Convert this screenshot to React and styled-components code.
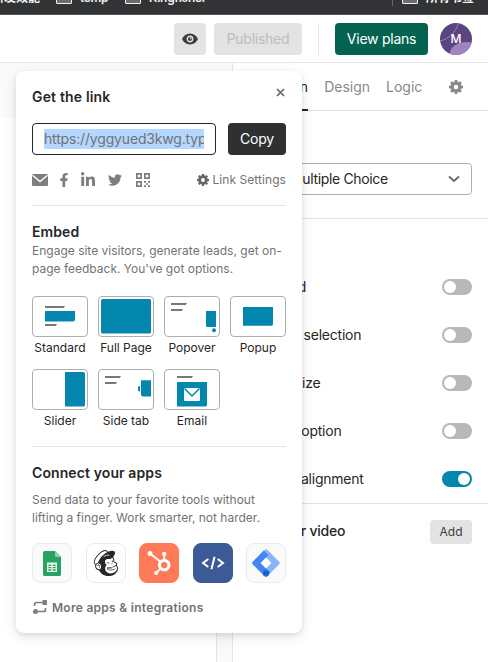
import React from 'react';
import styled, { createGlobalStyle } from 'styled-components';
import { FaFacebookF, FaLinkedinIn, FaTwitter } from 'react-icons/fa';
import { SiMailchimp, SiHubspot } from 'react-icons/si';

const GlobalStyle = createGlobalStyle`
  * { box-sizing: border-box; }
  body {
    margin: 0;
    overflow: hidden;
    background: #fff;
    color: #262627;
    font-family: Inter, "Noto Sans CJK SC", sans-serif;
    font-size: 14px;
  }
  svg { display: block; flex: none; }
  button { font-family: inherit; border: 0; padding: 0; margin: 0; }
`;

const Page = styled.div`
  position: relative;
  width: 488px;
  height: 662px;
  overflow: hidden;
  display: flex;
  flex-direction: column;
`;

const BookmarkBar = styled.div`
  height: 15px;
  flex: none;
  background: #323335;
  border-bottom: 1px solid #55565a;
  color: #f2f2f2;
  font-size: 12px;
  font-weight: 600;
  line-height: 14px;
  overflow: hidden;
  display: flex;
  align-items: flex-start;
`;

const Bookmark = styled.span`
  display: block;
  width: ${(p) => p.$w}px;
  margin-top: -9px;
  margin-left: ${(p) => p.$ml || 0}px;
  white-space: nowrap;
  flex: none;
  letter-spacing: ${(p) => p.$ls || 0}px;
`;

const Folder = styled.span`
  width: 16px;
  height: 11px;
  margin: -7px 8px 0 0;
  border: 1px solid #f2f2f2;
  border-radius: 1px;
  background: #6c6c6e;
  flex: none;
`;

const BarSplit = styled.span`
  width: 1px;
  height: 6px;
  margin-right: 9px;
  background: #68696b;
`;

const TopBar = styled.header`
  height: 48px;
  flex: none;
  padding-right: 16px;
  border-bottom: 1px solid #e6e6e6;
  display: flex;
  align-items: center;
  justify-content: flex-end;
`;

const TopButton = styled.button`
  width: ${(p) => p.$w}px;
  height: 32px;
  border-radius: 4px;
  margin-right: ${(p) => p.$mr}px;
  display: flex;
  align-items: center;
  justify-content: center;
  font-size: 14px;
  letter-spacing: ${(p) => p.$ls || 0}px;
  color: ${(p) => p.$color || '#3c3c3c'};
  background: ${(p) => p.$bg || '#e3e3e3'};
`;

const TopSplit = styled.span`
  width: 1px;
  height: 32px;
  margin-right: 16px;
  background: #e6e6e6;
`;

const Avatar = styled.div`
  width: 32px;
  height: 32px;
`;

const Body = styled.main`
  flex: 1;
  min-height: 0;
  display: flex;
`;

const Canvas = styled.section`
  width: 233px;
  flex: none;
  padding: 54px 15px 0 0;
  background: #fafafa;
  border-right: 1px solid #e6e6e6;
  display: flex;
`;

const Sheet = styled.div`
  flex: 1;
  background: #fff;
  border-right: 1px solid #e3e3e3;
`;

const Panel = styled.aside`
  flex: 1;
  display: flex;
  flex-direction: column;
`;

const Tabs = styled.nav`
  height: 48px;
  flex: none;
  padding: 0 25px 0 15px;
  border-bottom: 1px solid #e3e3e3;
  display: flex;
`;

const Tab = styled.span`
  height: 48px;
  margin-right: 16px;
  line-height: 48px;
  letter-spacing: ${(p) => (p.$on ? 0.12 : 0)}px;
  color: ${(p) => (p.$on ? '#262627' : '#898989')};
  border-bottom: ${(p) => (p.$on ? '2px solid #262627' : '0')};
`;

const TabGear = styled.span`
  margin: 17px 0 0 auto;
`;

const TypeBlock = styled.div`
  height: 108px;
  flex: none;
  padding: 52px 16px 0;
  border-bottom: 1px solid #e3e3e3;
`;

const Select = styled.div`
  height: 32px;
  padding: 0 10px 1px 40px;
  letter-spacing: -0.35px;
  border: 1px solid #aeaeae;
  border-radius: 4px;
  display: flex;
  align-items: center;
  justify-content: space-between;
`;

const SettingsBlock = styled.div`
  height: 285px;
  flex: none;
  padding: 16px 16px 0;
  border-bottom: 1px solid #e3e3e3;
`;

const SettingsTitle = styled.div`
  height: 28px;
  line-height: 24px;
  font-weight: 600;
  letter-spacing: -0.6px;
`;

const Row = styled.div`
  height: 48px;
  display: flex;
  align-items: center;
  justify-content: space-between;
`;

const RowLabel = styled.span`
  white-space: nowrap;
  margin-bottom: 2px;
  font-weight: ${(p) => (p.$bold ? 500 : 400)};
  letter-spacing: ${(p) => p.$ls || 0}px;
`;

const Toggle = styled.span`
  width: 30px;
  height: 16px;
  padding: 2px;
  border-radius: 8px;
  background: ${(p) => (p.$on ? '#0487af' : '#b8b8b8')};
  display: flex;
  justify-content: ${(p) => (p.$on ? 'flex-end' : 'flex-start')};
`;

const Knob = styled.span`
  width: 12px;
  height: 12px;
  border-radius: 50%;
  background: #fff;
`;

const MediaRow = styled.div`
  height: 55px;
  padding: 0 16px;
  display: flex;
  align-items: center;
  justify-content: space-between;
`;

const AddButton = styled.button`
  width: 42px;
  height: 24px;
  padding-bottom: 1px;
  border-radius: 4px;
  background: #e3e3e3;
  color: #3c3c3c;
  font-size: 12px;
`;

const Modal = styled.section`
  position: absolute;
  left: 16px;
  top: 71px;
  width: 286px;
  height: 562px;
  padding: 16px;
  border-radius: 8px;
  background: #fff;
  box-shadow: 0 2px 4px rgba(0, 0, 0, 0.08), 0 4px 14px rgba(0, 0, 0, 0.1);
`;

const Heading = styled.h2`
  margin: 0;
  font-size: 14px;
  line-height: 20px;
  font-weight: 600;
  letter-spacing: ${(p) => p.$ls || 0}px;
`;

const ModalHead = styled.div`
  height: 36px;
  display: flex;
  justify-content: space-between;
  svg { margin: 1px 1px 0 0; }
`;

const LinkRow = styled.div`
  display: flex;
  justify-content: space-between;
`;

const LinkField = styled.div`
  width: 184px;
  height: 32px;
  padding: 5px 11px;
  border: 1px solid #262627;
  border-radius: 4px;
`;

const Selected = styled.div`
  height: 20px;
  line-height: 20px;
  overflow: hidden;
  white-space: nowrap;
  letter-spacing: -0.17px;
  background: #b3d7ff;
  color: #737373;
`;

const CopyButton = styled.button`
  width: 58px;
  height: 32px;
  padding-bottom: 1px;
  border-radius: 4px;
  background: #2f3032;
  color: #fff;
  font-size: 14px;
  letter-spacing: -0.15px;
`;

const ShareRow = styled.div`
  height: 50px;
  display: flex;
  align-items: center;
  color: #7e7e7e;
`;

const ShareIcon = styled.span`
  margin-right: ${(p) => p.$mr}px;
`;

const LinkSettings = styled.span`
  margin-left: auto;
  display: flex;
  align-items: center;
  gap: 3px;
  padding-bottom: 1px;
  font-size: 12px;
  letter-spacing: 0.07px;
  white-space: nowrap;
  color: #737373;
`;

const Embed = styled.section`
  height: 241px;
  padding-top: 16px;
  border-top: 1px solid #e6e6e6;
`;

const Copy = styled.p`
  margin: ${(p) => p.$mt || 0}px 0 0;
  font-size: 12px;
  line-height: 18px;
  white-space: nowrap;
  color: #737373;
  letter-spacing: ${(p) => p.$ls || 0}px;
`;

const EmbedGrid = styled.div`
  margin-top: 18px;
  display: grid;
  grid-template-columns: repeat(4, 56px);
  grid-auto-rows: 73px;
  column-gap: 10px;
`;

const EmbedItem = styled.div`
  display: flex;
  flex-direction: column;
  align-items: center;
  font-size: 12px;
  line-height: 21px;
  white-space: nowrap;
`;

const Connect = styled.section`
  padding-top: 16px;
  border-top: 1px solid #e6e6e6;
`;

const Apps = styled.div`
  margin-top: 16px;
  display: flex;
  justify-content: space-between;
`;

const AppTile = styled.div`
  width: 40px;
  height: 40px;
  border-radius: 8px;
  border: 1px solid ${(p) => p.$line || p.$bg};
  background: ${(p) => p.$bg};
  color: ${(p) => p.$color || '#262627'};
  display: flex;
  align-items: center;
  justify-content: center;
`;

const More = styled.div`
  margin-top: 15px;
  height: 18px;
  padding-left: 1px;
  display: flex;
  align-items: center;
  gap: 5px;
  font-size: 12px;
  font-weight: 600;
  letter-spacing: 0.28px;
  color: #737373;
`;

const TEETH = [0, 45, 90, 135, 180, 225, 270, 315];

const Gear = ({ size, color }) => (
  <svg width={size} height={size} viewBox="0 0 14 14">
    <circle cx="7" cy="7" r="3.8" fill="none" stroke={color} strokeWidth="3.2" />
    {TEETH.map((a) => (
      <rect key={a} x="5.6" y="0" width="2.8" height="3" rx="0.5" fill={color} transform={`rotate(${a} 7 7)`} />
    ))}
  </svg>
);

const Eye = () => (
  <svg width="16" height="12" viewBox="0 0 16 12">
    <path d="M8 .6C4.4.6 1.5 2.8 0 6c1.500 3.200 4.400 5.400 8 5.400s6.500-2.200 8-5.400C14.500 2.800 11.600.6 8 .6z" fill="#3c3c3c" />
    <circle cx="8" cy="6" r="2.7" fill="none" stroke="#e3e3e3" strokeWidth="1.4" />
    <circle cx="8.6" cy="5.400" r=".8" fill="#e3e3e3" />
  </svg>
);

const Mail = () => (
  <svg width="16" height="12" viewBox="0 0 16 12">
    <rect width="16" height="12" rx="1" fill="currentColor" />
    <path d="M0.500 1.200 8 7.600l7.500-6.400" fill="none" stroke="#fff" strokeWidth="1.500" />
  </svg>
);

const Qr = () => (
  <svg width="14" height="14" viewBox="0 0 14 14" fill="none" stroke="currentColor" strokeWidth="1.700">
    <path d="M.85.85h4.300v4.300H.85zM8.850.85h4.300v4.300h-4.300zM.85 8.850h4.300v4.300H.85z" />
    <path d="M8 8.800h2M12 8.800h2M10 11h2M8 13.200h2M12 13.200h2" />
  </svg>
);

const Lines = ({ x, y, w }) => (
  <path d={`M${x} ${y}h${w}l-1.200 2H${x}z`} fill="#77787a" />
);

const ART = {
  Standard: (
    <>
      <Lines x={13} y={10} w={20} />
      <path d="M13 15h30v8.500q0 2-2 2H13z" fill="#0487af" />
      <Lines x={13} y={28} w={12} />
    </>
  ),
  'Full Page': <rect x="3" y="3" width="50" height="34.500" rx="1.500" fill="#0487af" />,
  Popover: (
    <>
      <Lines x={7} y={7} w={16} />
      <Lines x={7} y={13} w={12} />
      <path d="M42 15h10v16h-8.500q-1.500 0-1.500-1.500z" fill="#0487af" />
      <circle cx="50" cy="34.300" r="2" fill="#0487af" />
    </>
  ),
  Popup: <path d="M13 11h30v17q0 1.700-1.500 1.700H13z" fill="#0487af" />,
  Slider: <path d="M33 3h18.500q1.500 0 1.500 1.500V36q0 1.500-1.500 1.500H33z" fill="#0487af" />,
  'Side tab': (
    <>
      <Lines x={7} y={7} w={16} />
      <Lines x={7} y={13} w={12} />
      <path d="M43 11.200h10v16.300h-8.500L43 26zM42 17v5.500h-1l-1-1.300V18.300L41 17z" fill="#0487af" />
    </>
  ),
  Email: (
    <>
      <Lines x={13} y={7} w={16} />
      <path d="M13 13h30v23q0 1.500-1.500 1.500H13z" fill="#0487af" />
      <rect x="20" y="19" width="16" height="13" rx="1" fill="#fff" />
      <path d="M20.500 19.500 28 27l7.500-7.500" fill="none" stroke="#0487af" strokeWidth="1.500" />
    </>
  ),
};

const Thumb = ({ name }) => (
  <svg width="56" height="41" viewBox="0 0 56 41">
    <rect x=".5" y=".5" width="55" height="40" rx="3.500" fill="#fff" stroke="#aeaeae" />
    {ART[name]}
  </svg>
);

const Sheets = () => (
  <svg width="18" height="25" viewBox="0 0 18 25">
    <path d="M1.500 0H12l6 6v17.500a1.500 1.500 0 0 1-1.500 1.500h-15A1.500 1.500 0 0 1 0 23.500v-22A1.500 1.500 0 0 1 1.500 0z" fill="#28a263" />
    <path d="M12 0l6 6h-4.500A1.500 1.500 0 0 1 12 4.500z" fill="#8ed1b1" />
    <path d="M4 11.500h10v9.500H4z" fill="#eaf6ef" />
    <path d="M5.300 14.300h3M9.700 14.300h3M5.300 16.600h3M9.700 16.600h3M5.300 19h3M9.700 19h3" stroke="#28a263" strokeWidth="1.300" />
  </svg>
);

const Code = () => (
  <svg width="24" height="14" viewBox="0 0 24 14" fill="none" stroke="#fff" strokeWidth="2">
    <path d="M7.300 3 2 7l5.300 4M16.700 3 22 7l-5.300 4M13.600.8l-3.200 12.400" />
  </svg>
);

const TagManager = () => (
  <svg width="28" height="28" viewBox="0 0 28 28">
    <path d="M12.500.9a2.200 2.200 0 0 1 3 0L27 12.500a2.200 2.200 0 0 1 0 3L15.500 27.100a2.200 2.200 0 0 1-3 0L1 15.500a2.200 2.200 0 0 1 0-3z" fill="#8ab4f8" />
    <path d="M11.800 1.600 16.400 6 9 14l9.300 9.300-2.800 3.800a2.200 2.200 0 0 1-3 0L1 15.500a2.200 2.200 0 0 1 0-3z" fill="#4285f4" />
    <path d="M14 8.500l5.500 5.500-5.500 5.500L8.500 14z" fill="#fff" />
    <circle cx="14" cy="24.200" r="3.200" fill="#246fdb" />
    <path d="M13 22.500l-.5 3.500M15.500 22.500l-.5 3.500M12 23.500h4M11.800 25h4" stroke="#1c4d9c" strokeWidth=".6" />
  </svg>
);

const Swap = () => (
  <svg width="14" height="14" viewBox="0 0 14 14" fill="none" stroke="#7e7e7e" strokeWidth="1.700">
    <path d="M1.500 6V4.500a2 2 0 0 1 2-2H10M12.500 8v1.500a2 2 0 0 1-2 2H3" />
    <rect x="9.500" y="0" width="4.500" height="5" rx=".6" fill="#7e7e7e" stroke="none" />
    <circle cx="2.500" cy="11.500" r="2.500" fill="#7e7e7e" stroke="none" />
  </svg>
);

const OPTIONS = [
  ['Required', false],
  ['Multiple selection', false],
  ['Randomize', false],
  ['"Other" option', false],
  ['Vertical alignment', true],
];

export default function App() {
  return (
    <Page>
      <GlobalStyle />
      <BookmarkBar>
        <Bookmark $w={64} $ml={-8}>研发效能</Bookmark>
        <Folder />
        <Bookmark $w={45} $ls={-0.3}>temp</Bookmark>
        <Folder />
        <Bookmark $w={243} $ls={-0.3}>Kingfisher</Bookmark>
        <BarSplit />
        <Folder />
        <Bookmark $w={50}>所有书签</Bookmark>
      </BookmarkBar>
      <TopBar>
        <TopButton $w={32} $mr={8}><Eye /></TopButton>
        <TopButton $w={88} $mr={16} $color="#bdbdbd" $ls={-0.25}>Published</TopButton>
        <TopSplit />
        <TopButton $w={93} $mr={12} $bg="#046350" $color="#fff" $ls={-0.25}>View plans</TopButton>
        <Avatar>
          <svg width="32" height="32" viewBox="0 0 32 32">
            <defs><clipPath id="face"><circle cx="16" cy="16" r="16" /></clipPath></defs>
            <g clipPath="url(#face)">
              <rect width="32" height="32" fill="#5a4580" />
              <ellipse cx="27" cy="30" rx="17" ry="11" fill="#9d84c0" />
              <path d="M0 18C9 16 16 9 18.500 0" fill="none" stroke="#a89bbd" strokeWidth=".8" />
            </g>
            <text x="16" y="20" textAnchor="middle" fontSize="12" fontWeight="500" fill="#fff">M</text>
          </svg>
        </Avatar>
      </TopBar>
      <Body>
        <Canvas><Sheet /></Canvas>
        <Panel>
          <Tabs>
            <Tab $on>Question</Tab>
            <Tab>Design</Tab>
            <Tab>Logic</Tab>
            <TabGear><Gear size={14} color="#898989" /></TabGear>
          </Tabs>
          <TypeBlock>
            <Select>
              Multiple Choice
              <svg width="14" height="8" viewBox="0 0 14 8"><path d="M2 1.500l5 4.500 5-4.500" fill="none" stroke="#66676a" strokeWidth="1.800" /></svg>
            </Select>
          </TypeBlock>
          <SettingsBlock>
            <SettingsTitle>Settings</SettingsTitle>
            {OPTIONS.map(([label, on]) => (
              <Row key={label}>
                <RowLabel $ls={-0.22}>{label}</RowLabel>
                <Toggle $on={on}><Knob /></Toggle>
              </Row>
            ))}
          </SettingsBlock>
          <MediaRow>
            <RowLabel $bold $ls={-0.22}>Image or video</RowLabel>
            <AddButton>Add</AddButton>
          </MediaRow>
        </Panel>
      </Body>
      <Modal>
        <ModalHead>
          <Heading $ls={0.17}>Get the link</Heading>
          <svg width="9" height="9" viewBox="0 0 9 9"><path d="M1 1l7 7M8 1L1 8" stroke="#66676a" strokeWidth="1.700" /></svg>
        </ModalHead>
        <LinkRow>
          <LinkField><Selected>https://yggyued3kwg.typeform.com</Selected></LinkField>
          <CopyButton>Copy</CopyButton>
        </LinkRow>
        <ShareRow>
          <ShareIcon $mr={9}><Mail /></ShareIcon>
          <ShareIcon $mr={9}><FaFacebookF size={14} /></ShareIcon>
          <ShareIcon $mr={12}><FaLinkedinIn size={16} /></ShareIcon>
          <ShareIcon $mr={14}><FaTwitter size={14} /></ShareIcon>
          <ShareIcon $mr={0}><Qr /></ShareIcon>
          <LinkSettings><Gear size={12} color="#66676a" />Link Settings</LinkSettings>
        </ShareRow>
        <Embed>
          <Heading $ls={0.1}>Embed</Heading>
          <Copy>
            Engage site visitors, generate leads, get on-<br />page feedback. You've got options.
          </Copy>
          <EmbedGrid>
            {Object.keys(ART).map((name) => (
              <EmbedItem key={name}><Thumb name={name} />{name}</EmbedItem>
            ))}
          </EmbedGrid>
        </Embed>
        <Connect>
          <Heading $ls={0.1}>Connect your apps</Heading>
          <Copy $mt={8}>
            Send data to your favorite tools without<br />lifting a finger. Work smarter, not harder.
          </Copy>
          <Apps>
            <AppTile $bg="#fafafa" $line="#ebebeb"><Sheets /></AppTile>
            <AppTile $bg="#fff" $line="#ebebeb"><SiMailchimp size={26} /></AppTile>
            <AppTile $bg="#ff7a59" $color="#fff"><SiHubspot size={24} /></AppTile>
            <AppTile $bg="#3d5a98"><Code /></AppTile>
            <AppTile $bg="#fafafa" $line="#ebebeb"><TagManager /></AppTile>
          </Apps>
          <More><Swap />More apps &amp; integrations</More>
        </Connect>
      </Modal>
    </Page>
  );
}
